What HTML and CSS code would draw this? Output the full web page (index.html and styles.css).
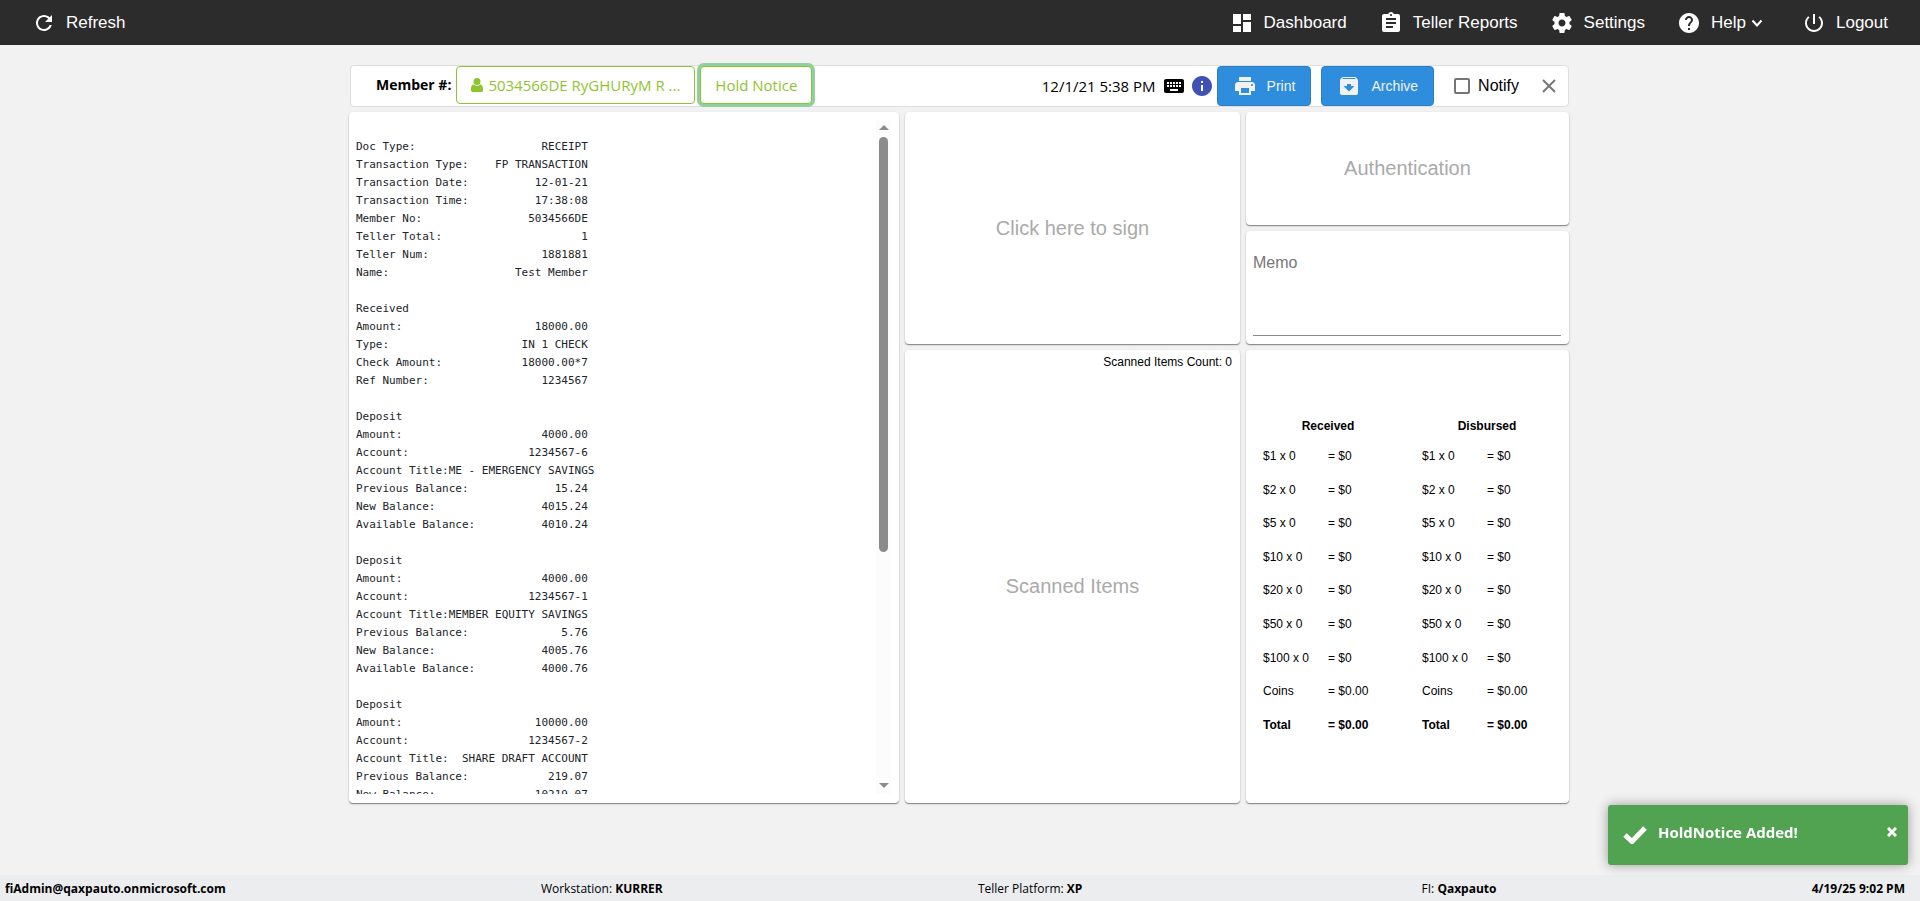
FILE: index.html
```
<!DOCTYPE html>
<html lang="en">
<head>
<meta charset="UTF-8">
<meta name="viewport" content="width=device-width, initial-scale=1.0">
<title>Teller Receipts</title>
<link rel="stylesheet" href="styles.css">
</head>
<body>

<header class="topbar">
  <a class="nav-link" href="#refresh">
    <svg class="icon" viewBox="0 0 24 24"><path d="M17.65 6.35C16.2 4.9 14.21 4 12 4c-4.42 0-7.99 3.58-7.99 8s3.57 8 7.99 8c3.73 0 6.84-2.55 7.73-6h-2.08c-.82 2.33-3.04 4-5.65 4-3.31 0-6-2.69-6-6s2.69-6 6-6c1.66 0 3.14.69 4.22 1.78L13 11h7V4l-2.35 2.35z"/></svg>
    Refresh
  </a>
  <nav class="nav">
    <a class="nav-link" href="#dashboard">
      <svg class="icon" viewBox="0 0 24 24"><path d="M3 13h8V3H3v10zm0 8h8v-6H3v6zm10 0h8V11h-8v10zm0-18v6h8V3h-8z"/></svg>
      Dashboard
    </a>
    <a class="nav-link" href="#reports">
      <svg class="icon" viewBox="0 0 24 24"><path d="M19 3h-4.18C14.4 1.84 13.3 1 12 1c-1.3 0-2.4.84-2.82 2H5c-1.1 0-2 .9-2 2v14c0 1.1.9 2 2 2h14c1.1 0 2-.9 2-2V5c0-1.1-.9-2-2-2zm-7 0c.55 0 1 .45 1 1s-.45 1-1 1-1-.45-1-1 .45-1 1-1zm2 14H7v-2h7v2zm3-4H7v-2h10v2zm0-4H7V7h10v2z"/></svg>
      Teller Reports
    </a>
    <a class="nav-link" href="#settings">
      <svg class="icon" viewBox="0 0 24 24"><path d="M19.43 12.98c.04-.32.07-.64.07-.98s-.03-.66-.07-.98l2.11-1.65c.19-.15.24-.42.12-.64l-2-3.46c-.12-.22-.39-.3-.61-.22l-2.49 1c-.52-.4-1.08-.73-1.69-.98l-.38-2.65C14.46 2.18 14.25 2 14 2h-4c-.25 0-.46.18-.49.42l-.38 2.65c-.61.25-1.17.59-1.69.98l-2.49-1c-.23-.09-.49 0-.61.22l-2 3.46c-.13.22-.07.49.12.64l2.11 1.65c-.04.32-.07.65-.07.98s.03.66.07.98l-2.11 1.65c-.19.15-.24.42-.12.64l2 3.46c.12.22.39.3.61.22l2.49-1c.52.4 1.08.73 1.69.98l.38 2.65c.03.24.24.42.49.42h4c.25 0 .46-.18.49-.42l.38-2.65c.61-.25 1.17-.59 1.69-.98l2.49 1c.23.09.49 0 .61-.22l2-3.46c.12-.22.07-.49-.12-.64l-2.11-1.65zM12 15.5c-1.93 0-3.5-1.57-3.5-3.5s1.57-3.5 3.5-3.5 3.5 1.57 3.5 3.5-1.57 3.5-3.5 3.5z"/></svg>
      Settings
    </a>
    <a class="nav-link nav-help" href="#help">
      <svg class="icon" viewBox="0 0 24 24"><path d="M12 2C6.48 2 2 6.48 2 12s4.48 10 10 10 10-4.48 10-10S17.52 2 12 2zm1 17h-2v-2h2v2zm2.07-7.75l-.9.92C13.45 12.9 13 13.5 13 15h-2v-.5c0-1.1.45-2.1 1.17-2.83l1.24-1.26c.37-.36.59-.86.59-1.41 0-1.1-.9-2-2-2s-2 .9-2 2H8c0-2.21 1.79-4 4-4s4 1.79 4 4c0 .88-.36 1.68-.93 2.25z"/></svg>
      Help
      <svg class="chevron" viewBox="0 0 12 12"><path d="M1.5 3.5 6 8.500l4.500-5"/></svg>
    </a>
    <a class="nav-link" href="#logout">
      <svg class="icon" viewBox="0 0 24 24"><path d="M13 3h-2v10h2V3zm4.830 2.170l-1.420 1.420C17.990 7.860 19 9.810 19 12c0 3.870-3.130 7-7 7s-7-3.130-7-7c0-2.190 1.010-4.140 2.580-5.420L6.170 5.170C4.230 6.820 3 9.260 3 12c0 4.970 4.030 9 9 9s9-4.030 9-9c0-2.740-1.230-5.180-3.170-6.830z"/></svg>
      Logout
    </a>
  </nav>
</header>

<main class="content">
  <div class="member-bar">
    <span class="member-label">Member #:</span>
    <button class="chip member-chip" type="button">
      <svg class="person" viewBox="0 0 12 14"><circle cx="6" cy="3.500" r="3.500"/><path d="M2.600 6.300C.8 7 0 8.500 0 11v1.200C0 13.300.8 14 1.800 14h8.400c1 0 1.800-.7 1.800-1.800V11c0-2.500-.8-4-2.600-4.700a4.600 4.600 0 0 1-6.800 0z"/></svg>
      <span>5034566DE RyGHURyM R ...</span>
    </button>
    <button class="chip hold-chip" type="button">Hold Notice</button>

    <div class="actions">
      <span class="stamp">12/1/21 5:38 PM</span>
      <svg class="icon keyboard" viewBox="0 0 24 24"><path d="M20 5H4c-1.100 0-1.990.9-1.990 2L2 17c0 1.100.9 2 2 2h16c1.100 0 2-.9 2-2V7c0-1.100-.9-2-2-2zm-9 3h2v2h-2V8zm0 3h2v2h-2v-2zM8 8h2v2H8V8zm0 3h2v2H8v-2zm-1 2H5v-2h2v2zm0-3H5V8h2v2zm9 7H8v-2h8v2zm0-4h-2v-2h2v2zm0-3h-2V8h2v2zm3 3h-2v-2h2v2zm0-3h-2V8h2v2z"/></svg>
      <svg class="icon info" viewBox="0 0 24 24"><path d="M12 2C6.480 2 2 6.480 2 12s4.480 10 10 10 10-4.480 10-10S17.520 2 12 2zm1 15h-2v-6h2v6zm0-8h-2V7h2v2z"/></svg>
      <button class="btn" type="button">
        <svg class="icon" viewBox="0 0 24 24"><path d="M19 8H5c-1.660 0-3 1.340-3 3v6h4v4h12v-4h4v-6c0-1.660-1.340-3-3-3zm-3 11H8v-5h8v5zm3-7c-.55 0-1-.45-1-1s.45-1 1-1 1 .45 1 1-.45 1-1 1zm-1-9H6v4h12V3z"/></svg>
        Print
      </button>
      <button class="btn btn-archive" type="button">
        <svg class="icon" viewBox="0 0 24 24"><path d="M20.540 5.230l-1.390-1.680C18.880 3.210 18.470 3 18 3H6c-.47 0-.88.21-1.160.55L3.460 5.230C3.170 5.570 3 6.020 3 6.500V19c0 1.100.9 2 2 2h14c1.100 0 2-.9 2-2V6.500c0-.48-.17-.93-.46-1.270zM12 17.500L6.500 12H10v-2h4v2h3.500L12 17.500zM5.120 5l.81-1h12l.94 1H5.120z"/></svg>
        Archive
      </button>
      <label class="notify"><input type="checkbox"> Notify</label>
      <button class="close" type="button" aria-label="Close">
        <svg viewBox="0 0 14 14"><path d="M1 1l12 12M13 1L1 13"/></svg>
      </button>
    </div>
  </div>

  <div class="panels">
    <section class="card receipt">
<pre class="receipt-text">

Doc Type:                   RECEIPT
Transaction Type:    FP TRANSACTION
Transaction Date:          12-01-21
Transaction Time:          17:38:08
Member No:                5034566DE
Teller Total:                     1
Teller Num:                 1881881
Name:                   Test Member

Received
Amount:                    18000.00
Type:                    IN 1 CHECK
Check Amount:            18000.00*7
Ref Number:                 1234567

Deposit
Amount:                     4000.00
Account:                  1234567-6
Account Title:ME - EMERGENCY SAVINGS
Previous Balance:             15.24
New Balance:                4015.24
Available Balance:          4010.24

Deposit
Amount:                     4000.00
Account:                  1234567-1
Account Title:MEMBER EQUITY SAVINGS
Previous Balance:              5.76
New Balance:                4005.76
Available Balance:          4000.76

Deposit
Amount:                    10000.00
Account:                  1234567-2
Account Title:  SHARE DRAFT ACCOUNT
Previous Balance:            219.07
New Balance:               10219.07
</pre>
      <div class="scrollbar" aria-hidden="true">
        <svg class="arrow" viewBox="0 0 10 5"><path d="M0 5l5-5 5 5z"/></svg>
        <div class="track"><div class="thumb"></div></div>
        <svg class="arrow" viewBox="0 0 10 5"><path d="M0 0l5 5 5-5z"/></svg>
      </div>
    </section>

    <section class="card sign">Click here to sign</section>

    <section class="card auth">Authentication</section>

    <section class="card memo">
      <textarea placeholder="Memo" aria-label="Memo"></textarea>
    </section>

    <section class="card scanned">
      <p class="scanned-count">Scanned Items Count: 0</p>
      <div class="scanned-body">Scanned Items</div>
    </section>

    <section class="card cash">
      <table class="cash-table">
        <thead><tr><th colspan="2">Received</th></tr></thead>
        <tbody>
          <tr><td>$1 x 0</td><td>= $0</td></tr>
          <tr><td>$2 x 0</td><td>= $0</td></tr>
          <tr><td>$5 x 0</td><td>= $0</td></tr>
          <tr><td>$10 x 0</td><td>= $0</td></tr>
          <tr><td>$20 x 0</td><td>= $0</td></tr>
          <tr><td>$50 x 0</td><td>= $0</td></tr>
          <tr><td>$100 x 0</td><td>= $0</td></tr>
          <tr><td>Coins</td><td>= $0.00</td></tr>
          <tr class="total"><td>Total</td><td>= $0.00</td></tr>
        </tbody>
      </table>
      <table class="cash-table">
        <thead><tr><th colspan="2">Disbursed</th></tr></thead>
        <tbody>
          <tr><td>$1 x 0</td><td>= $0</td></tr>
          <tr><td>$2 x 0</td><td>= $0</td></tr>
          <tr><td>$5 x 0</td><td>= $0</td></tr>
          <tr><td>$10 x 0</td><td>= $0</td></tr>
          <tr><td>$20 x 0</td><td>= $0</td></tr>
          <tr><td>$50 x 0</td><td>= $0</td></tr>
          <tr><td>$100 x 0</td><td>= $0</td></tr>
          <tr><td>Coins</td><td>= $0.00</td></tr>
          <tr class="total"><td>Total</td><td>= $0.00</td></tr>
        </tbody>
      </table>
    </section>
  </div>
</main>

<footer class="statusbar">
  <strong>fiAdmin@qaxpauto.onmicrosoft.com</strong>
  <span>Workstation: <strong>KURRER</strong></span>
  <span class="platform">Teller Platform: <strong>XP</strong></span>
  <span>FI: <strong>Qaxpauto</strong></span>
  <strong>4/19/25 9:02 PM</strong>
</footer>

<div class="toast" role="status">
  <svg class="toast-check" viewBox="0 0 24 18"><path d="M2 9l7 6.500L22 2"/></svg>
  <span class="toast-text">HoldNotice Added!</span>
  <button class="toast-close" type="button" aria-label="Dismiss">
    <svg viewBox="0 0 10 10"><path d="M1 1l8 8M9 1L1 9"/></svg>
  </button>
</div>

</body>
</html>
```
FILE: styles.css
```
* {
  box-sizing: border-box;
}
body {
  margin: 0;
  height: 100vh;
  display: flex;
  flex-direction: column;
  background: #f2f2f2;
  color: #000;
  font-family: "Liberation Sans", Arial, sans-serif;
  font-size: 16px;
}
button {
  font: inherit;
  cursor: pointer;
}
.icon {
  width: 24px;
  height: 24px;
  fill: currentColor;
  flex: none;
}

/* Top bar */
.topbar {
  display: flex;
  justify-content: space-between;
  align-items: center;
  height: 45px;
  padding: 0 32px;
  background: #2c2c2c;
  flex: none;
}
.nav {
  display: flex;
  gap: 32px;
}
.nav-link {
  display: flex;
  align-items: center;
  gap: 10px;
  color: #fff;
  font-size: 17px;
  text-decoration: none;
}
.nav-help {
  margin-right: 7px;
}
.chevron {
  width: 12px;
  height: 12px;
  margin-left: -5px;
  fill: none;
  stroke: #fff;
  stroke-width: 2;
}

/* Main area */
.content {
  flex: 1;
  min-height: 0;
  display: flex;
  flex-direction: column;
  gap: 5px;
  width: 100%;
  max-width: 1222px;
  margin: 0 auto;
  padding: 20px 2px 72px 0;
}
.member-bar {
  display: flex;
  align-items: center;
  height: 42px;
  margin-left: 1px;
  padding-left: 25px;
  background: #fff;
  border: 1px solid #dedede;
  border-radius: 4px;
  flex: none;
}
.member-label {
  margin-right: 5px;
  padding-bottom: 4px;
  font-family: "Open Sans", "Segoe UI", sans-serif;
  font-size: 14px;
  font-weight: 700;
}
.chip {
  height: 38px;
  margin-bottom: 2px;
  padding: 0 14px;
  background: #fff;
  border: 1px solid #8fc431;
  border-radius: 4px;
  color: #8fc431;
  font-family: "Open Sans", "Segoe UI", sans-serif;
  font-size: 15px;
  white-space: nowrap;
}
.member-chip {
  display: flex;
  align-items: center;
  gap: 5px;
}
.person {
  width: 12px;
  height: 14px;
  fill: currentColor;
}
.hold-chip {
  margin-left: 5px;
  box-shadow: 0 0 0 3px #8fd19e;
}
.actions {
  display: flex;
  align-items: center;
  margin-left: auto;
}
.stamp {
  margin-right: 6px;
  font-family: "Open Sans", "Segoe UI", sans-serif;
  font-size: 15px;
}
.info {
  margin: 0 3px 0 4px;
  color: #3f51b5;
}
.btn {
  display: flex;
  align-items: center;
  gap: 10px;
  height: 40px;
  padding: 0 15px;
  background: #2f8ddd;
  border: 1px solid #2a7fc8;
  border-radius: 4px;
  color: #f2f2f2;
  font-size: 14px;
}
.btn-archive {
  margin-left: 10px;
}
.notify {
  display: flex;
  align-items: center;
  gap: 8px;
  margin-left: 20px;
}
.notify input {
  appearance: none;
  width: 16px;
  height: 16px;
  margin: 0;
  border: 2px solid #757575;
  border-radius: 2px;
}
.close {
  display: flex;
  margin: 0 12px 0 23px;
  padding: 0;
  background: none;
  border: 0;
}
.close svg {
  width: 14px;
  height: 14px;
  fill: none;
  stroke: #777;
  stroke-width: 2;
}

/* Panels */
.panels {
  flex: 1;
  min-height: 0;
  display: grid;
  grid-template-columns: 550fr 335fr 323fr;
  grid-template-rows: minmax(0, 113fr) minmax(0, 113fr) minmax(0, 453fr);
  grid-template-areas:
    "receipt sign auth"
    "receipt sign memo"
    "receipt scanned cash";
  gap: 6px;
}
.card {
  background: #fff;
  border-radius: 4px;
  box-shadow: 0 1px 1px rgba(0,0,0,0.4), 0 1px 3px rgba(0,0,0,0.12);
}
.receipt {
  grid-area: receipt;
  display: flex;
  padding: 8px 8px 9px 7px;
}
.receipt-text {
  flex: 1;
  margin: 0;
  overflow: hidden;
  color: #212529;
  font-family: "DejaVu Sans Mono", Consolas, monospace;
  font-size: 11px;
  line-height: 18px;
}
.scrollbar {
  display: flex;
  flex-direction: column;
  align-items: center;
  gap: 7px;
  width: 15px;
  padding: 5px 0 6px;
  background: #fcfcfc;
}
.arrow {
  width: 10px;
  height: 5px;
  fill: #8b8b8b;
}
.track {
  flex: 1;
  width: 9px;
}
.thumb {
  height: 65%;
  background: #8b8b8b;
  border-radius: 5px;
}
.sign, .auth, .scanned-body {
  display: flex;
  align-items: center;
  justify-content: center;
  color: #aaa;
  font-size: 20px;
}
.sign {
  grid-area: sign;
}
.auth {
  grid-area: auth;
}
.memo {
  grid-area: memo;
  display: flex;
  padding: 23px 8px 8px 7px;
}
.memo textarea {
  flex: 1;
  padding: 0;
  border: 0;
  border-bottom: 1px solid #888;
  background: none;
  font: inherit;
  resize: none;
}
.memo textarea::placeholder {
  color: #777;
}
.scanned {
  grid-area: scanned;
  display: flex;
  flex-direction: column;
}
.scanned-count {
  margin: 0;
  padding: 5px 8px 0;
  font-size: 12px;
  line-height: 14px;
  text-align: right;
}
.scanned-body {
  flex: 1;
}
.cash {
  grid-area: cash;
  display: flex;
  align-items: center;
  justify-content: center;
  gap: 29px;
}
.cash-table {
  width: 130px;
  height: 330px;
  table-layout: fixed;
  border-collapse: collapse;
  font-size: 12px;
}
.cash-table th, .cash-table td {
  padding: 0;
}
.cash-table td {
  text-align: left;
  white-space: nowrap;
}
.cash-table th {
  height: 28px;
}
.total {
  font-weight: 700;
}

/* Status bar */
.statusbar {
  display: flex;
  justify-content: space-between;
  align-items: center;
  height: 26px;
  padding: 0 15px 0 5px;
  background: #ecedef;
  font-family: "Open Sans", "Segoe UI", sans-serif;
  font-size: 12px;
  flex: none;
}
.platform {
  padding-right: 24px;
}

/* Toast */
.toast {
  position: fixed;
  right: 12px;
  bottom: 36px;
  display: flex;
  align-items: center;
  width: 300px;
  height: 60px;
  padding: 0 11px 0 15px;
  background: #51a351;
  border-radius: 3px;
  box-shadow: 0 0 12px #999;
  color: #fff;
}
.toast-check {
  width: 24px;
  height: 18px;
  fill: none;
  stroke: #fff;
  stroke-width: 5;
}
.toast-text {
  margin-left: 11px;
  padding-bottom: 6px;
  font-family: "Open Sans", "Segoe UI", sans-serif;
  font-size: 15px;
  font-weight: 700;
}
.toast-close {
  display: flex;
  margin-left: auto;
  padding: 0 0 6px;
  background: none;
  border: 0;
}
.toast-close svg {
  width: 10px;
  height: 10px;
  fill: none;
  stroke: #fff;
  stroke-width: 3;
}
```
